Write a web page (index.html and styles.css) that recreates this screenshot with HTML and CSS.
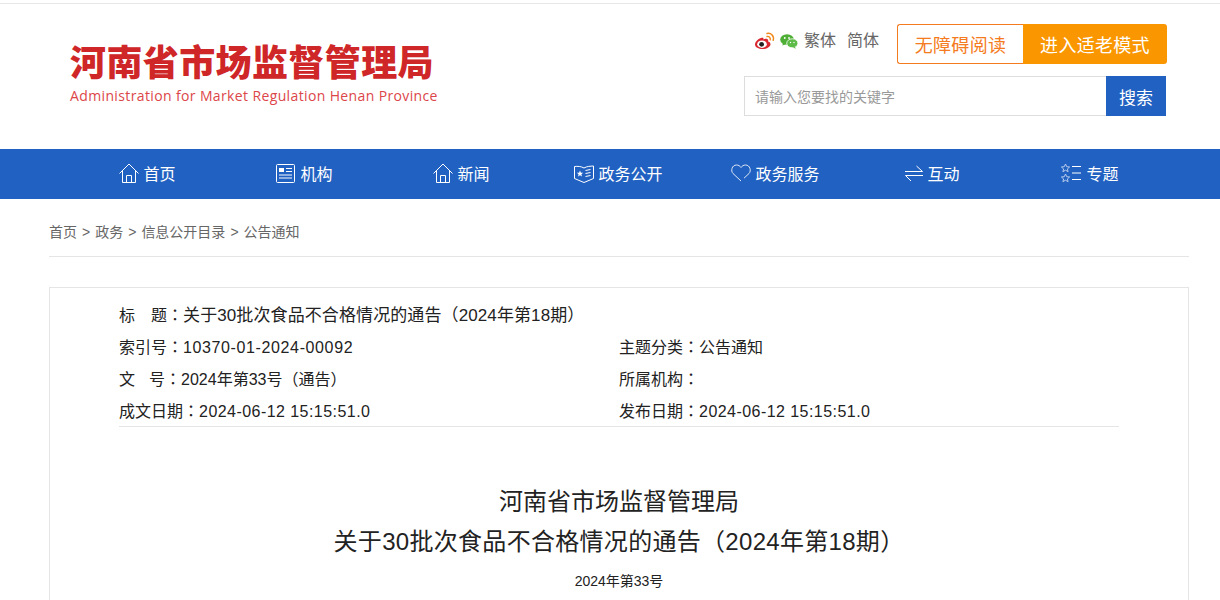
FILE: index.html
```html
<!DOCTYPE html>
<html lang="zh-CN">
<head>
    <meta charset="UTF-8">
    <title>关于30批次食品不合格情况的通告（2024年第18期）</title>
    <link rel="stylesheet" href="styles.css">
</head>
<body>
    <header class="header">
        <div class="logo">
            <div class="logo-name">河南省市场监督管理局</div>
            <div class="logo-en">Administration for Market Regulation Henan Province</div>
        </div>
        <div class="tools">
            <div class="tools-top">
                <svg class="social" width="21" height="18" viewBox="0 0 21 18">
                    <path d="M8.500 5.500C4.500 6.500 1 9.500 1 12.500c0 2.800 3.600 4.500 7.500 4.500 4.500 0 8-2.400 8-4.800 0-1.600-1.400-2.300-2.500-2.600.5-1.400.1-2.400-1-2.700-1.200-.3-2.800.3-3.600.7.3-1.200-.1-2.500-1.400-1.600z" fill="#d9282f"/>
                    <ellipse cx="8" cy="12.200" rx="4.800" ry="3.700" fill="#fff"/>
                    <circle cx="7.600" cy="12.300" r="2.400" fill="#222"/>
                    <path d="M13 4.500c2-.6 3.800 1.200 3.200 3.300" fill="none" stroke="#f08a1d" stroke-width="1.400" stroke-linecap="round"/>
                    <path d="M13 1.500c4.200-.9 7.400 2.700 6.200 6.800" fill="none" stroke="#f08a1d" stroke-width="1.500" stroke-linecap="round"/>
                </svg>
                <svg class="social" width="18" height="15" viewBox="0 0 18 15">
                    <ellipse cx="7" cy="5.500" rx="6.800" ry="5.300" fill="#4fae35"/>
                    <path d="M3 9l-.6 2.600L6 10z" fill="#4fae35"/>
                    <ellipse cx="12.300" cy="9.300" rx="5.600" ry="4.500" fill="#5cba46" stroke="#fff" stroke-width=".8"/>
                    <path d="M15 13l.8 1.800-3-1.300z" fill="#5cba46"/>
                    <circle cx="4.800" cy="4" r=".9" fill="#fff"/>
                    <circle cx="9" cy="4" r=".9" fill="#fff"/>
                    <circle cx="10.500" cy="8.500" r=".7" fill="#fff"/>
                    <circle cx="14" cy="8.500" r=".7" fill="#fff"/>
                </svg>
                <a class="lang">繁体</a>
                <a class="lang">简体</a>
                <div class="modes">
                    <a class="mode-plain">无障碍阅读</a>
                    <a class="mode-old">进入适老模式</a>
                </div>
            </div>
            <div class="search">
                <div class="search-input">请输入您要找的关键字</div>
                <button class="search-btn">搜索</button>
            </div>
        </div>
    </header>

    <nav class="nav">
        <div class="nav-inner">
            <a class="nav-item">
                <svg width="20" height="20" viewBox="0 0 20 20" fill="none" stroke="#fff"><path d="M.5 10.500L10 1l9.500 9.500M3.500 8v11.500h13V8M7.500 19.500v-7h5v7"/></svg>
                <span>首页</span>
            </a>
            <a class="nav-item">
                <svg width="20" height="19" viewBox="0 0 20 19" fill="none" stroke="#fff"><rect x=".5" y=".5" width="18" height="18" rx="1"/><rect x="3" y="4" width="5" height="4" fill="#fff" stroke="none"/><path d="M10 4.500h6M10 7.500h6M3 11h13M3 14h13"/></svg>
                <span>机构</span>
            </a>
            <a class="nav-item">
                <svg width="20" height="20" viewBox="0 0 20 20" fill="none" stroke="#fff"><path d="M.5 10.500L10 1l9.500 9.500M3.500 8v11.500h13V8M7.500 19.500v-7h5v7"/></svg>
                <span>新闻</span>
            </a>
            <a class="nav-item">
                <svg width="20" height="19" viewBox="0 0 20 19" fill="none" stroke="#fff"><path d="M.5 2.500c3-.3 6.500-.3 9.500 1.500 3-1.800 6.500-1.800 9.500-2v12.500l-9.500 4-9.500-4z"/><path d="M11.500 6.500l5-1M11.500 9.500l5-1M11.500 12.500l5-1"/><path d="M6 6.500l.9 2.200 2.300.1-1.800 1.500.6 2.300L6 11.300l-2 1.300.6-2.300L2.800 8.800l2.300-.1z" fill="#fff" stroke="none"/></svg>
                <span>政务公开</span>
            </a>
            <a class="nav-item">
                <svg width="20" height="18" viewBox="0 0 20 18" fill="none" stroke="#dfe8f7"><path d="M10 17L2 9.500C-.5 7 .8 1 5.500 1 7.500 1 9 2 10 3.500 11 2 12.500 1 14.500 1c4.700 0 6 6 3.500 8.500L13 14.200"/></svg>
                <span>政务服务</span>
            </a>
            <a class="nav-item">
                <svg width="18" height="17" viewBox="0 0 18 17" fill="none" stroke="#fff"><path d="M0 6.500h17.500L11.500 1M18 10.500H.5L6 16"/></svg>
                <span>互动</span>
            </a>
            <a class="nav-item">
                <svg width="22" height="20" viewBox="0 0 22 20" fill="none"><path d="M5.500 1l1.200 2.700 2.900.3-2.200 1.900.7 2.800-2.600-1.500-2.600 1.500.7-2.800L1.400 4l2.900-.3zM5.500 11l1.200 2.700 2.900.3-2.200 1.900.7 2.800-2.600-1.500-2.600 1.500.7-2.800L1.400 14l2.900-.3z" stroke="#b9cdee"/><path d="M12 3.500h9M12 10h9M12 16.500h9" stroke="#fff"/></svg>
                <span>专题</span>
            </a>
        </div>
    </nav>

    <main class="main">
        <div class="crumbs">
            <a>首页</a><i>&gt;</i><a>政务</a><i>&gt;</i><a>信息公开目录</a><i>&gt;</i><a>公告通知</a>
        </div>
        <section class="card">
            <div class="meta">
                <div class="meta-full">标<em class="gap"></em>题<b lang="zh-Hant">：</b><span class="big">关于30批次食品不合格情况的通告<b lang="ko" class="kr">（</b>2024年第18期<b lang="ko" class="kr">）</b></span></div>
                <div>索引号<b lang="zh-Hant">：</b><span class="num num-w">10370-01-2024-00092</span></div>
                <div>主题分类<b lang="zh-Hant">：</b>公告通知</div>
                <div>文<em class="gap gap-s"></em>号<b lang="zh-Hant">：</b>2024年第33号<b lang="ko" class="kr">（</b>通告<b lang="ko" class="kr">）</b></div>
                <div>所属机构<b lang="zh-Hant">：</b></div>
                <div>成文日期<b lang="zh-Hant">：</b><span class="num">2024-06-12 15:15:51.0</span></div>
                <div>发布日期<b lang="zh-Hant">：</b><span class="num">2024-06-12 15:15:51.0</span></div>
            </div>
            <h1 class="title">河南省市场监督管理局<span class="title-sub">关于30批次食品不合格情况的通告<b lang="ko" class="kr">（</b>2024年第18期<b lang="ko" class="kr">）</b></span></h1>
            <p class="doc-no">2024年第33号</p>
        </section>
    </main>
</body>
</html>
```

FILE: styles.css
```css
* {
    box-sizing: border-box;
}
html, body {
    height: 600px;
    overflow: hidden;
}
body {
    margin: 0;
    padding-top: 3px;
    background-color: #fff;
    font-family: "Liberation Sans", "Noto Sans CJK SC", sans-serif;
    color: #333;
}
a {
    color: inherit;
    text-decoration: none;
}
.header {
    height: 146px;
    display: flex;
    justify-content: space-between;
    padding: 0 53px 0 70px;
    border-top: 1px solid #e8e8e8;
}
.logo {
    padding-top: 31px;
}
.logo-name {
    font-family: "Noto Sans CJK SC", sans-serif;
    font-size: 36px;
    line-height: 50px;
    font-weight: 900;
    letter-spacing: 0.4px;
    color: #cf2628;
    white-space: nowrap;
}
.logo-en {
    font-size: 14px;
    line-height: 18px;
    margin-top: 2px;
    letter-spacing: 0.37px;
    color: #dc4649;
    font-family: "Open Sans", sans-serif;
    white-space: nowrap;
}
.tools {
    width: 423px;
    padding-top: 20px;
}
.tools-top {
    display: flex;
    align-items: center;
    height: 40px;
    padding-left: 10px;
}
.social {
    margin-right: 5px;
    margin-top: -6px;
}
.lang {
    font-size: 16px;
    color: #666;
    margin-left: 1px;
    margin-right: 10px;
    margin-top: -6px;
    line-height: 24px;
}
.modes {
    display: flex;
    margin-left: auto;
    height: 40px;
    font-size: 18px;
    line-height: 38px;
    letter-spacing: 0.3px;
    text-align: center;
}
.mode-plain {
    width: 126px;
    padding-top: 2px;
    border: 1px solid #f47b20;
    border-right: none;
    border-radius: 3px 0 0 3px;
    color: #f47b20;
}
.mode-old {
    width: 144px;
    padding-top: 3px;
    background-color: #fa9600;
    border-radius: 0 3px 3px 0;
    color: #fff;
}
.search {
    display: flex;
    margin-top: 12px;
    height: 40px;
    margin-right: 1px;
}
.search-input {
    flex: 1;
    border: 1px solid #ddd;
    border-right: none;
    padding-left: 10px;
    font-size: 14px;
    line-height: 40px;
    color: #999;
}
.search-btn {
    width: 60px;
    border: none;
    padding: 0;
    background-color: #2161c1;
    color: #fff;
    font-family: inherit;
    font-size: 17px;
}
.nav {
    height: 50px;
    background-color: #2161c1;
}
.nav-inner {
    display: grid;
    grid-template-columns: repeat(7, 157px);
    margin-left: 69px;
    height: 50px;
}
.nav-item {
    display: flex;
    align-items: center;
    justify-content: center;
    gap: 4px;
    padding-bottom: 2px;
    color: #fff;
    font-size: 16px;
}
.main {
    margin-left: 49px;
    width: 1140px;
}
.crumbs {
    height: 58px;
    border-bottom: 1px solid #e5e5e5;
    padding-top: 21px;
    font-size: 14px;
    line-height: 24px;
    color: #666;
}
.crumbs i {
    font-style: normal;
    margin: 0 5px;
}
.card {
    margin-top: 30px;
    height: 400px;
    border: 1px solid #e5e5e5;
    padding: 12px 69px 0;
}
.meta {
    display: grid;
    grid-template-columns: 500px 500px;
    grid-auto-rows: 32px;
    font-size: 16px;
    line-height: 32px;
    color: #222;
    border-bottom: 1px solid #e5e5e5;
    height: 127px;
}
.meta-full {
    grid-column: 1 / 3;
}
/* full-width punctuation sits in the middle of its cell in the reference */
b {
    font-family: "Noto Sans CJK TC", sans-serif;
    font-weight: 400;
    line-height: 1;
}
.kr {
    font-family: "Noto Sans CJK KR", sans-serif;
}
.big {
    font-size: 17px;
    letter-spacing: 0.1px;
}
.num {
    letter-spacing: 0.45px;
}
.num-w {
    letter-spacing: 0.62px;
}
.gap {
    display: inline-block;
    width: 16px;
}
.gap-s {
    width: 14px;
}
.title {
    margin: 55px 0 0;
    text-align: center;
    font-size: 24px;
    line-height: 40px;
    font-weight: 400;
    color: #222;
}
.title-sub {
    display: block;
    letter-spacing: 0.3px;
}
.doc-no {
    margin: 9px 0 0;
    text-align: center;
    font-size: 14px;
    line-height: 20px;
    color: #222;
}
```
